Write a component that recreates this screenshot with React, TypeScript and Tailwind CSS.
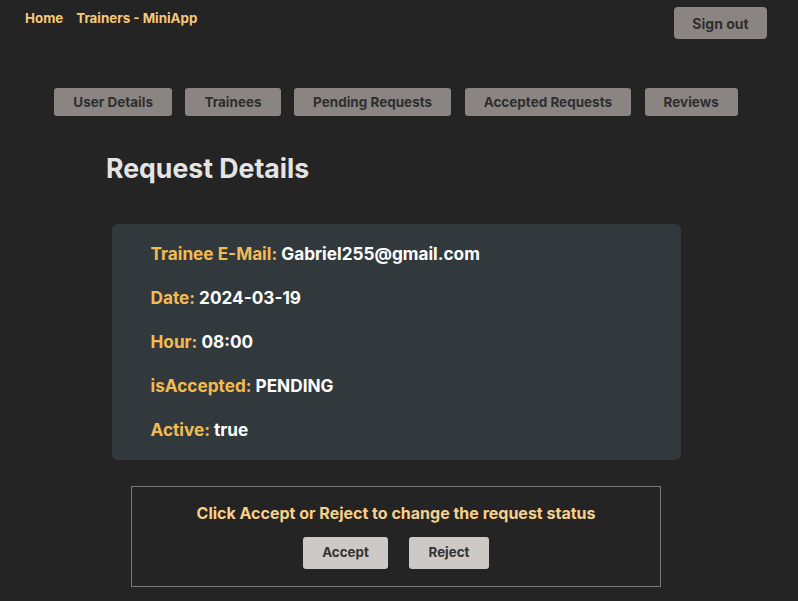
import React from "react";

const tabs = ["User Details", "Trainees", "Pending Requests", "Accepted Requests", "Reviews"];

const details = [
  { label: "Trainee E-Mail:", value: "Gabriel255@gmail.com" },
  { label: "Date:", value: "2024-03-19" },
  { label: "Hour:", value: "08:00" },
  { label: "isAccepted:", value: "PENDING" },
  { label: "Active:", value: "true" },
];

export default function App() {
  return (
    <div
      className="w-[798px] h-[601px] overflow-hidden bg-[#242424] text-white"
      style={{ fontFamily: "Inter, 'Noto Sans', sans-serif" }}
    >
      <div className="w-[792px]">
        <header className="flex items-start justify-between pl-[25px] pr-[25px]">
          <nav className="flex gap-[13px] pt-[9px] text-[13.33px] font-bold text-[#f6c979]">
            <a>Home</a>
            <a>Trainers - MiniApp</a>
          </nav>
          <button className="mt-[7px] w-[93px] h-[32px] rounded-[4px] bg-[#8a8583] text-[14px] font-bold text-[#2e2e2e]">
            Sign out
          </button>
        </header>

        <div className="flex justify-center gap-[13.5px] mt-[49px]">
          {tabs.map((t) => (
            <button
              key={t}
              className="h-[28px] px-[19px] rounded-[3px] bg-[#8a8583] text-[13.5px] font-bold text-[#2e2e2e]"
            >
              {t}
            </button>
          ))}
        </div>

        <h1 className="ml-[106px] mt-[36px] text-[26.67px] font-bold text-[#e4e4e4] leading-[32px]">
          Request Details
        </h1>

        <div className="mx-auto mt-[40px] w-[569px] rounded-[6px] bg-[#32393d] px-[39px] py-[20px] flex flex-col gap-[24px]">
          {details.map((d) => (
            <p key={d.label} className="text-[17.2px] font-bold leading-[20px]">
              <span className="text-[#f2bb52]">{d.label}</span>{" "}
              <span className="text-white">{d.value}</span>
            </p>
          ))}
        </div>

        <div className="mx-auto mt-[26px] w-[530px] h-[101px] border border-[#7a7a7a] flex flex-col items-center pt-[16px]">
          <p className="text-[16px] font-bold text-[#f7d08b] leading-[20px]">
            Click Accept or Reject to change the request status
          </p>
          <div className="flex gap-[21px] mt-[14px]">
            <button className="w-[85px] h-[32px] rounded-[3px] bg-[#cdc9c6] text-[13.33px] font-bold text-[#333]">
              Accept
            </button>
            <button className="w-[80px] h-[32px] rounded-[3px] bg-[#cdc9c6] text-[13.33px] font-bold text-[#333]">
              Reject
            </button>
          </div>
        </div>
      </div>
    </div>
  );
}
